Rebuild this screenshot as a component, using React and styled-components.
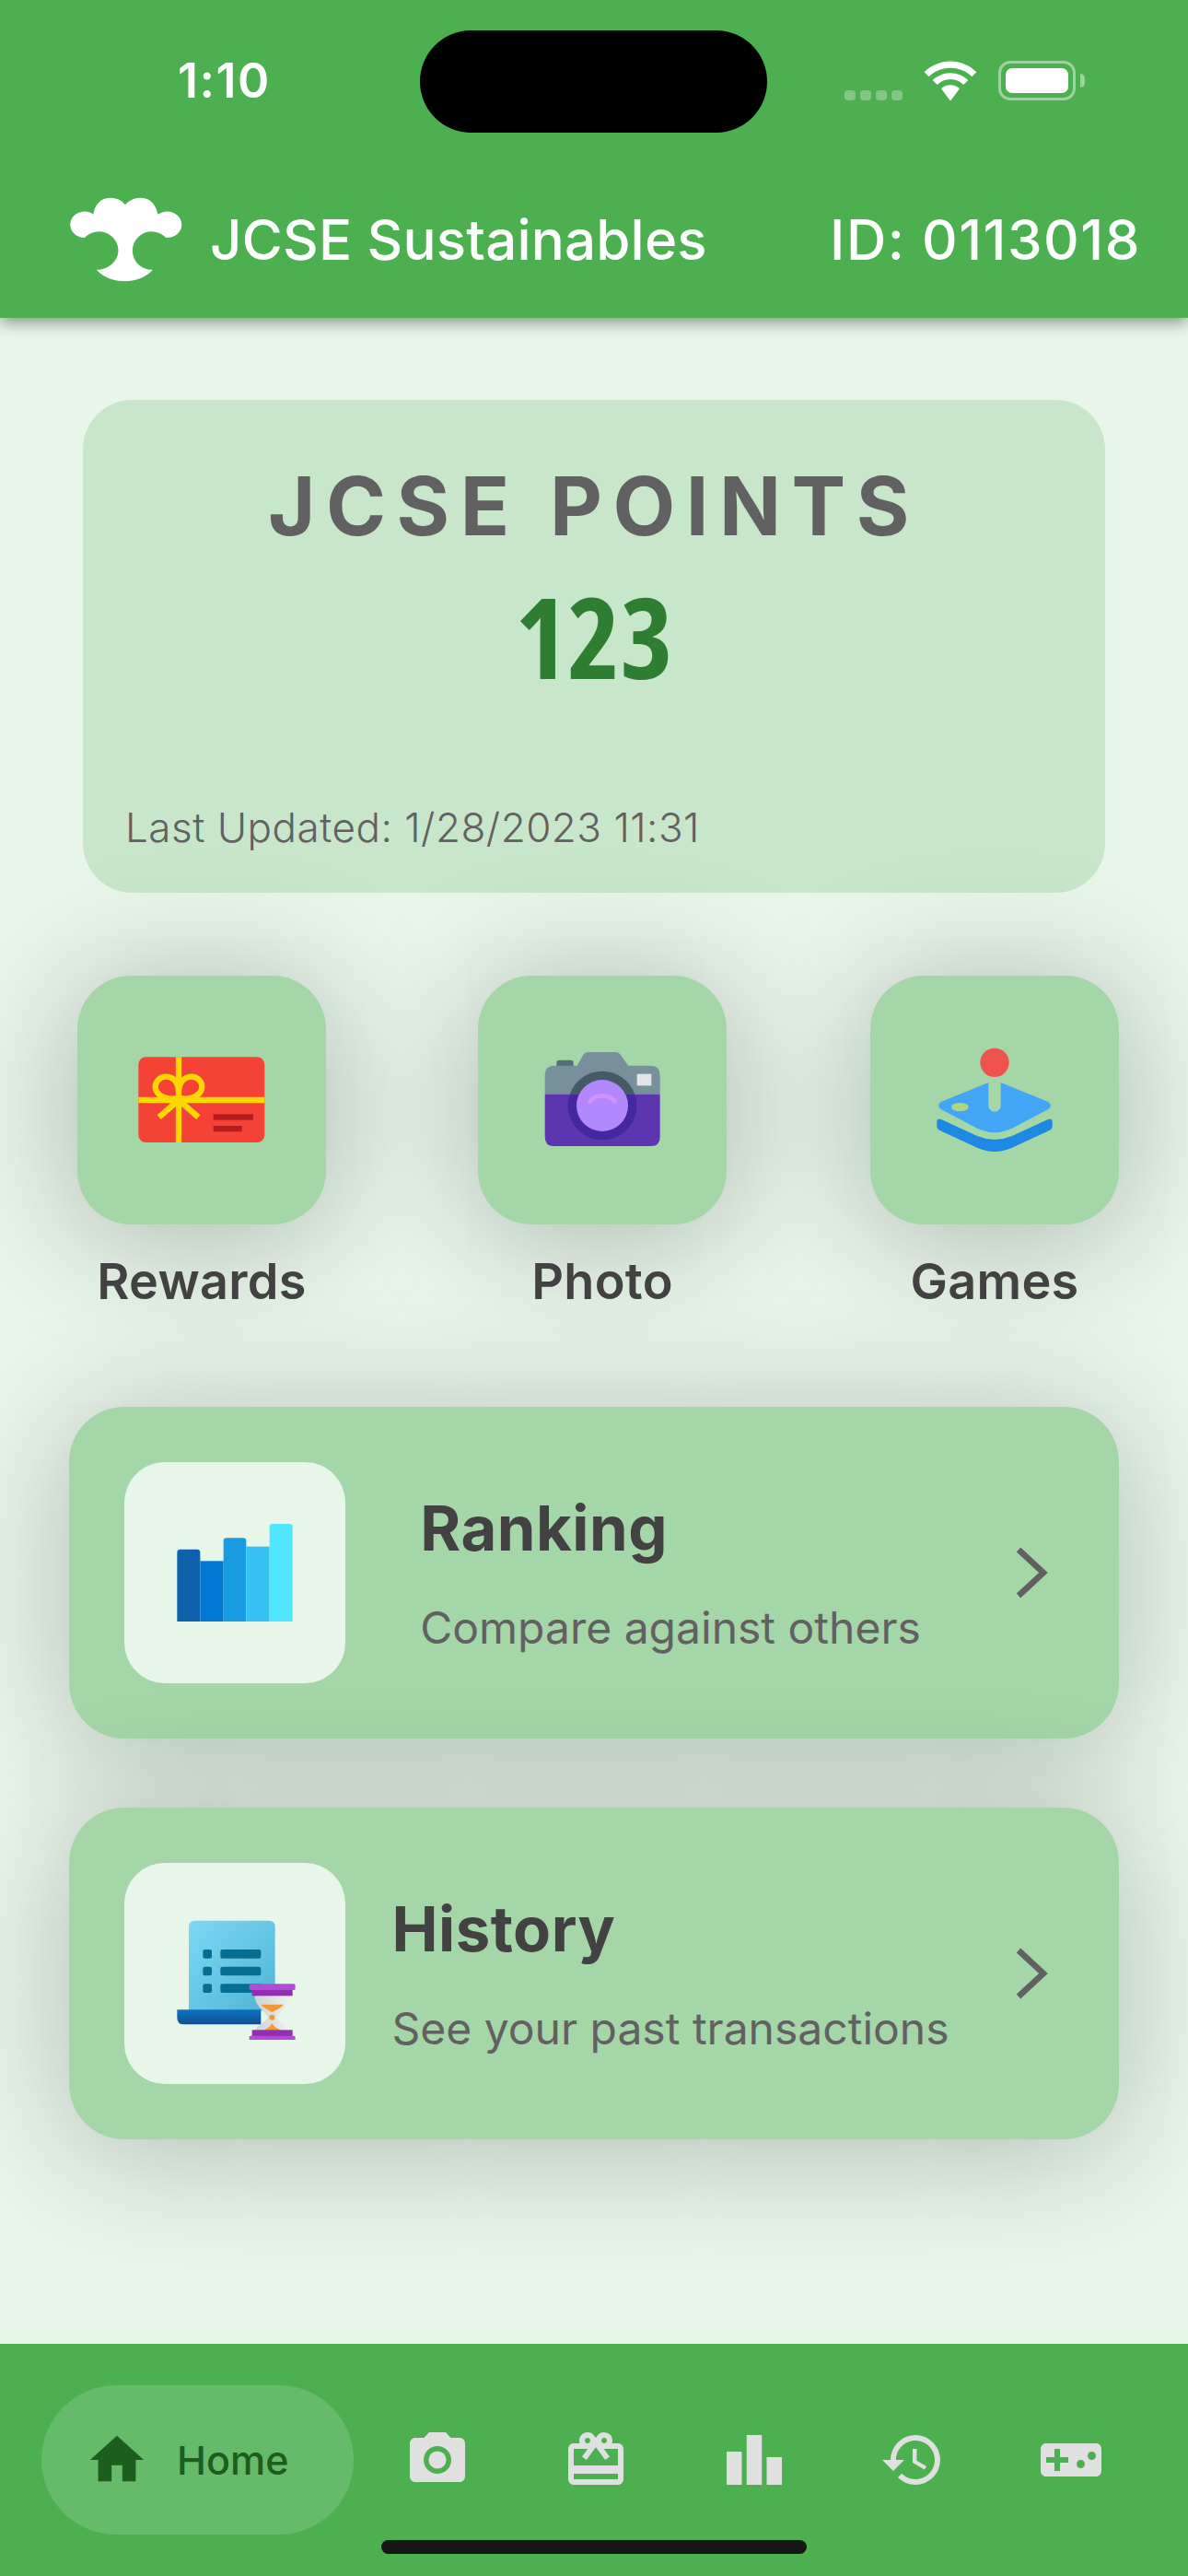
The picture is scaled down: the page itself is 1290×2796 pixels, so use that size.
import React from 'react'
import styled, { createGlobalStyle } from 'styled-components'
import {
  MdHome,
  MdPhotoCamera,
  MdCardGiftcard,
  MdLeaderboard,
  MdHistory,
  MdVideogameAsset,
} from 'react-icons/md'

const GlobalStyle = createGlobalStyle`
  html, body {
    margin: 0;
    padding: 0;
    background: #e8f5e9;
  }
  * {
    box-sizing: border-box;
  }
`

const Logo = () => (
  <svg width="122" height="92" viewBox="50 44 370 277" fill="#fff">
    <path d="M232 68C218 50 198 44 180 45C150 46 130 70 127 100C115 90 100 88 85 92C62 98 50 115 51 135C52 160 75 178 100 176C108 165 125 157 145 156C180 156 209 185 209 218C209 255 175 282 137 282C160 308 195 320 230 320C265 320 300 308 323 282C285 282 256 255 256 218C256 185 285 156 318 156C340 157 355 165 365 176C392 178 418 160 418 133C418 110 395 90 372 90C360 90 348 94 339 100C335 70 315 46 285 45C265 44 245 52 232 68Z" />
  </svg>
)

const Wifi = () => (
  <svg width="58" height="43" viewBox="3 2 52 38.500" fill="#fff">
    <path d="M29 9C37 9 44.500 12 50 17.500L54.500 13C47.800 6.500 38.800 2.500 29 2.500C19.200 2.500 10.200 6.500 3.500 13L8 17.500C13.500 12 21 9 29 9Z" />
    <path d="M29 20C34 20 38.500 22 41.800 25.300L46.300 20.800C41.800 16.500 35.700 13.800 29 13.800C22.300 13.800 16.200 16.500 11.700 20.800L16.200 25.300C19.500 22 24 20 29 20Z" />
    <path d="M29 25.500C25.500 25.500 22.300 26.800 20 29L29 41L38 29C35.700 26.800 32.500 25.500 29 25.500Z" />
  </svg>
)

const GiftIcon = () => (
  <svg width="144" height="144" viewBox="51 6 432 432">
    <rect x="61" y="82" width="411" height="278" rx="24" fill="#f44336" />
    <g fill="none" stroke="#ffd600" strokeWidth="19">
      <path d="M192 82V360M61 222H472" />
      <path d="M188 215C165 222 130 215 118 190C110 165 130 145 152 146C175 147 192 165 192 195C192 165 210 147 232 146C254 145 274 165 266 190C254 215 218 222 196 215" />
      <path d="M192 222L128 278M192 222L256 278" />
    </g>
    <rect x="305" y="268" width="130" height="19" fill="#b71c1c" />
    <rect x="305" y="306" width="93" height="19" fill="#b71c1c" />
  </svg>
)

const CameraIcon = () => (
  <svg width="144" height="144" viewBox="36 6 432 432">
    <rect x="103" y="92" width="55" height="34" rx="9" fill="#546e7a" />
    <path d="M65 203V140Q65 110 95 110H170L188 78Q194 66 208 66H295Q307 66 314 78L337 110H410Q440 110 440 140V203Z" fill="#78909c" />
    <path d="M65 203H440V342Q440 372 410 372H95Q65 372 65 342Z" fill="#5e35b1" />
    <path d="M146.300 203A112 112 0 0 1 357.700 203Z" fill="#455a64" />
    <path d="M146.300 203H357.700A112 112 0 1 1 146.300 203Z" fill="#4527a0" />
    <circle cx="252" cy="240" r="84" fill="#b388ff" />
    <path d="M212 226C230 202 275 202 293 226" fill="none" stroke="#ce93ff" strokeWidth="14" strokeLinecap="round" />
    <rect x="365" y="137" width="47" height="38" fill="#dfe5e8" />
  </svg>
)

const JoystickIcon = () => (
  <svg width="144" height="144" viewBox="24 6 432 432">
    <path d="M52 294Q52 280 66 285L185 340Q240 362 295 340L414 285Q428 280 428 294V308Q428 316 420 320L295 378Q240 402 185 378L60 320Q52 316 52 308Z" fill="#1e88e5" />
    <path d="M220 165L65 228Q50 240 65 252L185 315Q240 340 295 315L415 252Q430 240 415 228L260 165V240A20 20 0 0 1 220 240Z" fill="#42a5f5" />
    <ellipse cx="127" cy="245" rx="28" ry="14" fill="#aed581" />
    <circle cx="240" cy="100" r="47" fill="#ef5350" />
  </svg>
)

const ChartIcon = () => (
  <svg width="144" height="144" viewBox="249 225 432 432">
    <path d="M277 375Q277 365 287 365H342Q352 365 352 375V600H277Z" fill="#0d62ab" />
    <rect x="352" y="403" width="76" height="197" fill="#0078d4" />
    <path d="M428 338Q428 328 438 328H492Q502 328 502 338V600H428Z" fill="#199be2" />
    <rect x="502" y="356" width="76" height="244" fill="#35c1f1" />
    <path d="M578 292Q578 282 588 282H643Q653 282 653 292V600H578Z" fill="#50e6ff" />
  </svg>
)

const LedgerIcon = () => (
  <svg width="144" height="144" viewBox="189 93 432 432">
    <defs>
      <linearGradient id="sheet" x1="0" y1="0" x2="1" y2="1">
        <stop offset="0" stopColor="#7dd8f5" />
        <stop offset="1" stopColor="#50b4d6" />
      </linearGradient>
      <linearGradient id="base" x1="0" y1="0" x2="0" y2="1">
        <stop offset="0" stopColor="#0a72c4" />
        <stop offset="1" stopColor="#12508f" />
      </linearGradient>
      <linearGradient id="glass" x1="0" y1="0" x2="1" y2="0">
        <stop offset="0" stopColor="#cfd2d6" />
        <stop offset="1" stopColor="#eceef0" />
      </linearGradient>
    </defs>
    <path d="M255 430V157Q255 137 275 137H516Q536 137 536 157V430Z" fill="url(#sheet)" />
    <path d="M217 427H490V475H240Q217 475 217 452Z" fill="url(#base)" />
    <g fill="#066e93">
      <rect x="301" y="231" width="29" height="29" rx="6" />
      <rect x="301" y="287" width="29" height="29" rx="6" />
      <rect x="301" y="343" width="29" height="29" rx="6" />
      <rect x="358" y="231" width="132" height="29" rx="6" />
      <rect x="358" y="287" width="132" height="29" rx="6" />
      <rect x="358" y="343" width="132" height="29" rx="6" />
    </g>
    <path d="M470 380H583C583 415 555 425 540 452C555 475 583 480 583 500H470C470 480 498 475 513 452C498 425 470 415 470 380Z" fill="url(#glass)" />
    <path d="M490 410H564C552 425 535 428 527 436C519 428 502 425 490 410Z" fill="#f09a30" />
    <circle cx="526" cy="452" r="9" fill="#f09a30" />
    <path d="M498 494C510 490 520 482 526 472C532 482 544 490 556 494Z" fill="#f09a30" />
    <rect x="461" y="362" width="132" height="20" fill="#952cb4" />
    <rect x="452" y="343" width="150" height="20" rx="5" fill="#ae4cd5" />
    <rect x="461" y="493" width="132" height="20" fill="#952cb4" />
    <rect x="452" y="512" width="150" height="19" rx="5" fill="#ae4cd5" />
  </svg>
)

const Chevron = () => (
  <ChevronMark width="38" height="60" viewBox="0 0 38 60">
    <path d="M5 5L32 30L5 55" fill="none" stroke="#616161" strokeWidth="6.500" />
  </ChevronMark>
)

const tiles = [
  { label: 'Rewards', icon: <GiftIcon />, gap: 84 },
  { label: 'Photo', icon: <CameraIcon />, gap: 165 },
  { label: 'Games', icon: <JoystickIcon />, gap: 156 },
]

const cards = [
  { title: 'Ranking', text: 'Compare against others', icon: <ChartIcon /> },
  { title: 'History', text: 'See your past transactions', icon: <LedgerIcon /> },
]

const navIcons = [
  { icon: <MdPhotoCamera />, name: 'photo' },
  { icon: <MdCardGiftcard />, name: 'rewards' },
  { icon: <MdLeaderboard />, name: 'ranking' },
  { icon: <MdHistory />, name: 'history' },
  { icon: <MdVideogameAsset />, name: 'games' },
]

export default function App() {
  return (
    <Page>
      <GlobalStyle />
      <Header>
        <StatusBar>
          <Clock>1:10</Clock>
          <Island />
          <StatusIcons>
            <Signal>
              <i />
              <i />
              <i />
              <i />
            </Signal>
            <Wifi />
            <Battery>
              <BatteryFill />
            </Battery>
          </StatusIcons>
        </StatusBar>
        <Toolbar>
          <Brand>
            <Logo />
            <Title>JCSE Sustainables</Title>
          </Brand>
          <UserId>ID: 0113018</UserId>
        </Toolbar>
      </Header>

      <Main>
        <PointsCard>
          <PointsHeading>JCSE POINTS</PointsHeading>
          <PointsValue>123</PointsValue>
          <Updated>Last Updated: 1/28/2023 11:31</Updated>
        </PointsCard>

        <TileRow>
          {tiles.map((t) => (
            <Tile key={t.label} $gap={t.gap}>
              <TileBox>{t.icon}</TileBox>
              <TileLabel>{t.label}</TileLabel>
            </Tile>
          ))}
        </TileRow>

        <CardList>
          {cards.map((c) => (
            <LinkCard key={c.title}>
              <CardIcon>{c.icon}</CardIcon>
              <CardBody>
                <div>
                  <CardTitle>{c.title}</CardTitle>
                  <CardText>{c.text}</CardText>
                </div>
              </CardBody>
              <Chevron />
            </LinkCard>
          ))}
        </CardList>
      </Main>

      <BottomNav>
        <HomePill>
          <MdHome />
          <span>Home</span>
        </HomePill>
        <NavIcons>
          {navIcons.map((n) => (
            <NavIcon key={n.name}>{n.icon}</NavIcon>
          ))}
        </NavIcons>
        <HomeIndicator />
      </BottomNav>
    </Page>
  )
}

const Page = styled.div`
  width: 1290px;
  height: 2796px;
  display: flex;
  flex-direction: column;
  overflow: hidden;
  background: #e8f5e9;
  font-family: Inter, 'Liberation Sans', sans-serif;
`

const Header = styled.header`
  height: 345px;
  background: #4caf50;
  box-shadow: 0 5px 16px rgba(0, 0, 0, 0.4);
  position: relative;
  z-index: 2;
`

const StatusBar = styled.div`
  height: 175px;
  padding: 0 122px 0 193px;
  display: flex;
  align-items: center;
  justify-content: space-between;
  position: relative;
`

const Clock = styled.span`
  font-size: 52px;
  font-weight: 600;
  color: #fff;
  letter-spacing: 1.5px;
`

const Island = styled.div`
  position: absolute;
  left: 456px;
  top: 33px;
  width: 377px;
  height: 111px;
  border-radius: 56px;
  background: #000;
`

const StatusIcons = styled.div`
  display: flex;
  align-items: flex-end;
  gap: 23px;
`

const Signal = styled.div`
  display: flex;
  gap: 5px;
  align-items: flex-end;
  & > i {
    width: 12px;
    height: 11px;
    border-radius: 4px;
    background: rgba(255, 255, 255, 0.3);
  }
`

const Battery = styled.div`
  width: 84px;
  height: 43px;
  padding: 5px;
  border: 3px solid rgba(255, 255, 255, 0.45);
  border-radius: 13px;
  position: relative;
  &::after {
    content: '';
    position: absolute;
    right: -13px;
    top: 11px;
    width: 5px;
    height: 15px;
    border-radius: 0 5px 5px 0;
    background: rgba(255, 255, 255, 0.45);
  }
`

const BatteryFill = styled.div`
  height: 100%;
  border-radius: 7px;
  background: #fff;
`

const Toolbar = styled.div`
  height: 170px;
  padding: 0 51px 0 76px;
  display: flex;
  align-items: center;
  justify-content: space-between;
`

const Brand = styled.div`
  display: flex;
  align-items: center;
  gap: 30px;
`

const Title = styled.span`
  font-size: 60px;
  font-weight: 500;
  letter-spacing: 0.2px;
  color: #fff;
`

const UserId = styled(Title)`
  letter-spacing: 1.5px;
`

const Main = styled.main`
  flex: 1;
  padding-top: 89px;
`

const PointsCard = styled.section`
  margin: 0 90px;
  height: 535px;
  padding: 70px 46px 0;
  border-radius: 54px;
  background: #c8e6c9;
  display: flex;
  flex-direction: column;
  align-items: center;
`

const PointsHeading = styled.h2`
  margin: 0;
  font-size: 88px;
  line-height: 90px;
  font-weight: 650;
  letter-spacing: 11.500px;
  color: #616161;
`

const PointsValue = styled.div`
  margin-top: 37px;
  font-family: 'Open Sans', sans-serif;
  font-size: 122px;
  line-height: 118px;
  font-weight: 700;
  font-stretch: condensed;
  color: #2e7d32;
`

const Updated = styled.div`
  align-self: flex-start;
  margin-top: auto;
  margin-bottom: 44px;
  font-size: 44px;
  font-weight: 300;
  letter-spacing: 0.5px;
  color: #616161;
`

const TileRow = styled.div`
  margin-top: 90px;
  display: flex;
`

const Tile = styled.div`
  width: 270px;
  margin-left: ${(p) => p.$gap}px;
  display: flex;
  flex-direction: column;
  align-items: center;
`

const TileBox = styled.div`
  width: 270px;
  height: 270px;
  border-radius: 58px;
  background: #a5d6a7;
  box-shadow: 0 12px 140px rgba(0, 0, 0, 0.27);
  display: flex;
  align-items: center;
  justify-content: center;
`

const TileLabel = styled.div`
  margin-top: 30px;
  font-size: 54px;
  line-height: 64px;
  font-weight: 600;
  letter-spacing: 0.3px;
  color: #424242;
`

const CardList = styled.div`
  margin-top: 104px;
  margin-left: 75px;
  width: 1140px;
  display: flex;
  flex-direction: column;
  gap: 75px;
`

const LinkCard = styled.article`
  height: 360px;
  padding: 0 76px 0 60px;
  border-radius: 60px;
  background: #a5d6a7;
  box-shadow: 0 12px 140px rgba(0, 0, 0, 0.24);
  display: flex;
  align-items: center;
`

const CardIcon = styled.div`
  width: 240px;
  height: 240px;
  flex: none;
  border-radius: 44px;
  background: #e8f5e9;
  display: flex;
  align-items: center;
  justify-content: center;
`

const CardBody = styled.div`
  flex: 1;
  padding-right: 20px;
  display: flex;
  justify-content: center;
`

const CardTitle = styled.h3`
  margin: 0;
  font-size: 67px;
  line-height: 80px;
  font-weight: 700;
  letter-spacing: 0.5px;
  color: #424242;
`

const CardText = styled.p`
  margin: 40px 0 0;
  font-size: 48px;
  line-height: 56px;
  font-weight: 400;
  color: #616161;
`

const ChevronMark = styled.svg`
  flex: none;
`

const BottomNav = styled.nav`
  height: 252px;
  padding: 45px 0 0 45px;
  background: #4caf50;
  display: flex;
  align-items: flex-start;
  position: relative;
`

const HomePill = styled.div`
  width: 339px;
  height: 162px;
  padding-left: 47px;
  border-radius: 81px;
  background: #66bb6a;
  color: #1b5e20;
  display: flex;
  align-items: center;
  gap: 30px;
  font-size: 43px;
  font-weight: 500;
  & svg {
    width: 70px;
    height: 70px;
  }
`

const NavIcons = styled.div`
  margin-left: 55px;
  height: 162px;
  display: flex;
  align-items: center;
  gap: 100px;
`

const NavIcon = styled.div`
  display: flex;
  color: #e0e0e0;
  & svg {
    width: 72px;
    height: 72px;
  }
`

const HomeIndicator = styled.div`
  position: absolute;
  left: 414px;
  top: 213px;
  width: 462px;
  height: 15px;
  border-radius: 8px;
  background: #171717;
`
